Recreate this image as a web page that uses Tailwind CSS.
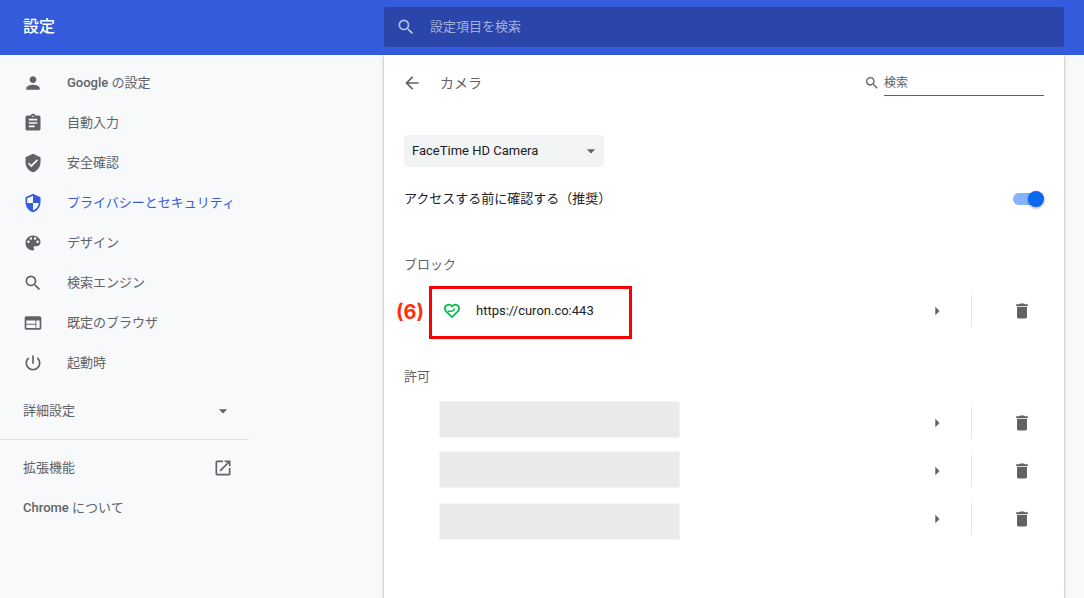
<!DOCTYPE html>
<html lang="ja">
<head>
<meta charset="utf-8">
<meta name="viewport" content="width=device-width, initial-scale=1">
<title>設定 - カメラ</title>
<script src="https://cdn.jsdelivr.net/npm/@tailwindcss/browser@4"></script>
</head>
<body class="flex min-h-screen flex-col bg-[#f8f9fb] font-[Roboto,'Noto_Sans_CJK_JP',sans-serif] text-[13px] leading-5 text-[#202124]">
<svg class="hidden" aria-hidden="true">
  <symbol id="search" viewBox="0 0 24 24"><path d="M15.5 14h-.79l-.28-.27A6.471 6.471 0 0 0 16 9.5 6.5 6.5 0 1 0 9.5 16c1.61 0 3.09-.59 4.23-1.57l.27.28v.79l5 4.99L20.49 19l-4.99-5zm-6 0C7.01 14 5 11.99 5 9.5S7.01 5 9.5 5 14 7.01 14 9.5 11.99 14 9.5 14z"/></symbol>
  <symbol id="down" viewBox="0 0 24 24"><path d="M7 10l5 5 5-5z"/></symbol>
  <symbol id="right" viewBox="0 0 24 24"><path d="M10 7l5 5-5 5z"/></symbol>
  <symbol id="trash" viewBox="0 0 24 24"><path d="M6 19c0 1.1.9 2 2 2h8c1.100 0 2-.9 2-2V7H6v12zM19 4h-3.500l-1-1h-5l-1 1H5v2h14V4z"/></symbol>
</svg>

<header class="flex bg-[#335bdc] pt-[7px] pb-2">
  <h1 class="flex w-[384px] shrink-0 items-center pl-[23px] text-base font-medium text-white">設定</h1>
  <label class="mr-5 flex h-10 flex-1 items-center rounded-xs bg-[#2a46ab] pl-3">
    <svg class="size-5 fill-[#b4c0e8]" aria-hidden="true"><use href="#search"/></svg>
    <input type="search" aria-label="設定項目を検索" placeholder="設定項目を検索" class="ml-3.5 min-w-0 flex-1 bg-transparent text-white outline-none placeholder:text-[#a2b0de]">
  </label>
</header>

<div class="flex flex-1">
  <nav class="w-[384px] shrink-0 pt-2 text-[#5f6368]">
    <ul class="font-medium">
      <li><a href="#" class="flex h-10 items-center gap-6 pl-[23px]"><svg class="size-5 fill-current" viewBox="0 0 24 24"><path d="M12 12c2.210 0 4-1.790 4-4s-1.790-4-4-4-4 1.790-4 4 1.790 4 4 4zm0 2c-2.670 0-8 1.340-8 4v2h16v-2c0-2.660-5.330-4-8-4z"/></svg><span>Google <span class="font-normal">の設定</span></span></a></li>
      <li><a href="#" class="flex h-10 items-center gap-6 pl-[23px] font-normal"><svg class="size-5 fill-current" viewBox="0 0 24 24"><path d="M19 3h-4.180C14.400 1.840 13.300 1 12 1c-1.300 0-2.400.84-2.820 2H5c-1.100 0-2 .9-2 2v14c0 1.100.9 2 2 2h14c1.100 0 2-.9 2-2V5c0-1.100-.9-2-2-2zm-7 0c.55 0 1 .45 1 1s-.45 1-1 1-1-.45-1-1 .45-1 1-1zm2 14H7v-2h7v2zm3-4H7v-2h10v2zm0-4H7V7h10v2z"/></svg>自動入力</a></li>
      <li><a href="#" class="flex h-10 items-center gap-6 pl-[23px] font-normal"><svg class="size-5 fill-current" viewBox="0 0 24 24"><path d="M12 1L3 5v6c0 5.550 3.840 10.740 9 12 5.160-1.260 9-6.450 9-12V5l-9-4zm-2 16l-4-4 1.410-1.410L10 14.170l6.590-6.590L18 9l-8 8z"/></svg>安全確認</a></li>
      <li><a href="#" aria-current="page" class="flex h-10 items-center gap-6 pl-[23px] font-normal text-[#335bdc]"><svg class="size-5 fill-current" viewBox="0 0 24 24"><path d="M12 1L3 5v6c0 5.550 3.840 10.740 9 12 5.160-1.260 9-6.450 9-12V5l-9-4zm0 10.990h7c-.53 4.120-3.280 7.790-7 8.940V12H5V6.300l7-3.110v8.800z"/></svg>プライバシーとセキュリティ</a></li>
      <li><a href="#" class="flex h-10 items-center gap-6 pl-[23px] font-normal"><svg class="size-5 fill-current" viewBox="0 0 24 24"><path d="M12 3c-4.970 0-9 4.030-9 9s4.030 9 9 9c.83 0 1.500-.67 1.500-1.500 0-.39-.15-.74-.39-1.010-.23-.26-.38-.61-.38-.99 0-.83.67-1.500 1.500-1.500H16c2.760 0 5-2.240 5-5 0-4.420-4.030-8-9-8zm-5.500 9c-.83 0-1.500-.67-1.500-1.500S5.670 9 6.500 9 8 9.670 8 10.500 7.330 12 6.500 12zm3-4C8.670 8 8 7.330 8 6.500S8.670 5 9.500 5s1.500.67 1.500 1.500S10.330 8 9.500 8zm5 0c-.83 0-1.500-.67-1.500-1.500S13.670 5 14.500 5s1.500.67 1.500 1.500S15.330 8 14.500 8zm3 4c-.83 0-1.500-.67-1.500-1.500S16.670 9 17.500 9s1.500.67 1.500 1.500-.67 1.500-1.500 1.500z"/></svg>デザイン</a></li>
      <li><a href="#" class="flex h-10 items-center gap-6 pl-[23px] font-normal"><svg class="size-5 fill-current"><use href="#search"/></svg>検索エンジン</a></li>
      <li><a href="#" class="flex h-10 items-center gap-6 pl-[23px] font-normal"><svg class="size-5 fill-current" viewBox="0 0 24 24"><path d="M20 4H4c-1.100 0-1.990.9-1.990 2L2 18c0 1.100.9 2 2 2h16c1.100 0 2-.9 2-2V6c0-1.100-.9-2-2-2zm-5 14H4v-4h11v4zm0-5H4V9h11v4zm5 5h-4V9h4v9z"/></svg>既定のブラウザ</a></li>
      <li><a href="#" class="flex h-10 items-center gap-6 pl-[23px] font-normal"><svg class="size-5 fill-current" viewBox="0 0 24 24"><path d="M13 3h-2v10h2V3zm4.830 2.170l-1.420 1.420C17.990 7.860 19 9.810 19 12c0 3.870-3.130 7-7 7s-7-3.130-7-7c0-2.190 1.010-4.140 2.580-5.420L6.170 5.170C4.230 6.820 3 9.260 3 12c0 4.970 4.030 9 9 9s9-4.030 9-9c0-2.740-1.230-5.180-3.170-6.830z"/></svg>起動時</a></li>
    </ul>
    <div class="w-[249px]">
      <button type="button" class="mt-2 flex h-10 w-full items-center justify-between pr-4 pl-[23px]">詳細設定<svg class="size-5 fill-current"><use href="#down"/></svg></button>
      <hr class="mt-2 mb-2 border-[#dfe1e5]">
      <a href="#" class="flex h-10 items-center justify-between pr-4 pl-[23px]">拡張機能<svg class="size-5 fill-current" viewBox="0 0 24 24"><path d="M19 19H5V5h7V3H5c-1.110 0-2 .9-2 2v14c0 1.100.89 2 2 2h14c1.100 0 2-.9 2-2v-7h-2v7zM14 3v2h3.590l-9.830 9.830 1.410 1.410L19 6.410V10h2V3h-7z"/></svg></a>
      <a href="#" class="flex h-10 items-center pl-[23px]"><span><span class="font-medium">Chrome</span> について</span></a>
    </div>
  </nav>

  <main class="mr-5 min-w-0 flex-1 bg-white px-5 shadow-[0_1px_2px_rgba(60,64,67,0.3),0_1px_3px_1px_rgba(60,64,67,0.15)]">
    <div class="flex h-14 items-center text-[#5f6368]">
      <button type="button" aria-label="戻る" class="-ml-0.5"><svg class="size-5 fill-current" viewBox="0 0 24 24"><path d="M20 11H7.830l5.590-5.590L12 4l-8 8 8 8 1.410-1.410L7.830 13H20v-2z"/></svg></button>
      <h2 class="ml-[18px] flex-1 text-sm">カメラ</h2>
      <label class="flex items-center gap-1 text-xs">
        <svg class="size-4 fill-current" aria-hidden="true"><use href="#search"/></svg>
        <input type="search" aria-label="検索" placeholder="検索" class="h-[26px] w-40 border-b border-[#5f6368] bg-transparent outline-none placeholder:text-[#5f6368]">
      </label>
    </div>

    <div class="relative mt-6 w-[200px]">
      <select aria-label="カメラ" class="h-8 w-full appearance-none rounded bg-[#f1f3f4] pl-2">
        <option>FaceTime HD Camera</option>
      </select>
      <svg class="pointer-events-none absolute top-1.5 right-[3px] size-5 fill-[#5f6368]"><use href="#down"/></svg>
    </div>

    <label class="flex h-16 items-center justify-between">
      アクセスする前に確認する（推奨）
      <span class="relative flex h-4 w-[31px] items-center">
        <input type="checkbox" role="switch" checked class="peer h-3 w-7 appearance-none rounded-full bg-[#1a73e8]/50 checked:bg-[#86b2f9]">
        <span class="absolute right-0 size-4 rounded-full bg-[#0b66f0] shadow-[0_1px_3px_rgba(0,0,0,0.4)]"></span>
      </span>
    </label>

    <section>
      <h3 class="mt-3 flex h-11 items-center text-[#5f6368]">ブロック</h3>
      <div class="relative flex h-12 items-center">
        <svg class="ml-10 size-4" viewBox="0 0 16 16" fill="none" stroke="#0cbd50" stroke-width="1.800" stroke-linecap="round" stroke-linejoin="round"><path d="M8 3.400C6.800 1.700 4.700 1.300 3 2.100 1.300 3 .6 4.900 1.100 6.500c.2.900.7 1.500 1.300 2.100L8 14.100l5.600-5.500c.6-.6 1.100-1.200 1.300-2.100.5-1.600-.2-3.500-1.900-4.400C11.300 1.300 9.200 1.700 8 3.400z"/><path stroke-width="1.600" d="M4.600 8.200H7.600C9 8.200 10 7.300 10.400 6"/></svg>
        <a href="#" class="ml-4 flex-1">https://curon.co:443</a>
        <button type="button" aria-label="詳細" class="mr-6"><svg class="size-5 fill-[#5f6368]"><use href="#right"/></svg></button>
        <span class="h-8 border-l border-[#e4e6e9]"></span>
        <button type="button" aria-label="削除" class="mr-3 ml-10"><svg class="size-5 fill-[#5f6368]"><use href="#trash"/></svg></button>
        <div class="pointer-events-none absolute -top-px -left-2 flex items-start gap-[5px]">
          <span class="w-7 pt-3 text-xl font-bold text-[#ff2f0a] font-[Inter,sans-serif]">(6)</span>
          <span class="h-[53px] w-[203px] border-3 border-[#fb0007]"></span>
        </div>
      </div>
    </section>

    <section>
      <h3 class="mt-5 flex h-11 items-center text-[#5f6368]">許可</h3>
      <div class="relative">
        <ul>
          <li class="flex h-12 items-center justify-end">
            <button type="button" aria-label="詳細" class="mr-6"><svg class="size-5 fill-[#5f6368]"><use href="#right"/></svg></button>
            <span class="h-8 border-l border-[#e4e6e9]"></span>
            <button type="button" aria-label="削除" class="mr-3 ml-10"><svg class="size-5 fill-[#5f6368]"><use href="#trash"/></svg></button>
          </li>
          <li class="flex h-12 items-center justify-end">
            <button type="button" aria-label="詳細" class="mr-6"><svg class="size-5 fill-[#5f6368]"><use href="#right"/></svg></button>
            <span class="h-8 border-l border-[#e4e6e9]"></span>
            <button type="button" aria-label="削除" class="mr-3 ml-10"><svg class="size-5 fill-[#5f6368]"><use href="#trash"/></svg></button>
          </li>
          <li class="flex h-12 items-center justify-end">
            <button type="button" aria-label="詳細" class="mr-6"><svg class="size-5 fill-[#5f6368]"><use href="#right"/></svg></button>
            <span class="h-8 border-l border-[#e4e6e9]"></span>
            <button type="button" aria-label="削除" class="mr-3 ml-10"><svg class="size-5 fill-[#5f6368]"><use href="#trash"/></svg></button>
          </li>
        </ul>
        <!-- Masks over the private site names -->
        <div class="pointer-events-none absolute top-0.5 left-[35px] flex flex-col">
          <span class="h-[37px] w-[241px] border border-[#f4f4f4] bg-[#eaeaea]"></span>
          <span class="mt-[13px] h-[37px] w-[241px] border border-[#f4f4f4] bg-[#eaeaea]"></span>
          <span class="mt-[15px] h-[37px] w-[241px] border border-[#f4f4f4] bg-[#eaeaea]"></span>
        </div>
      </div>
    </section>
  </main>
</div>
</body>
</html>
